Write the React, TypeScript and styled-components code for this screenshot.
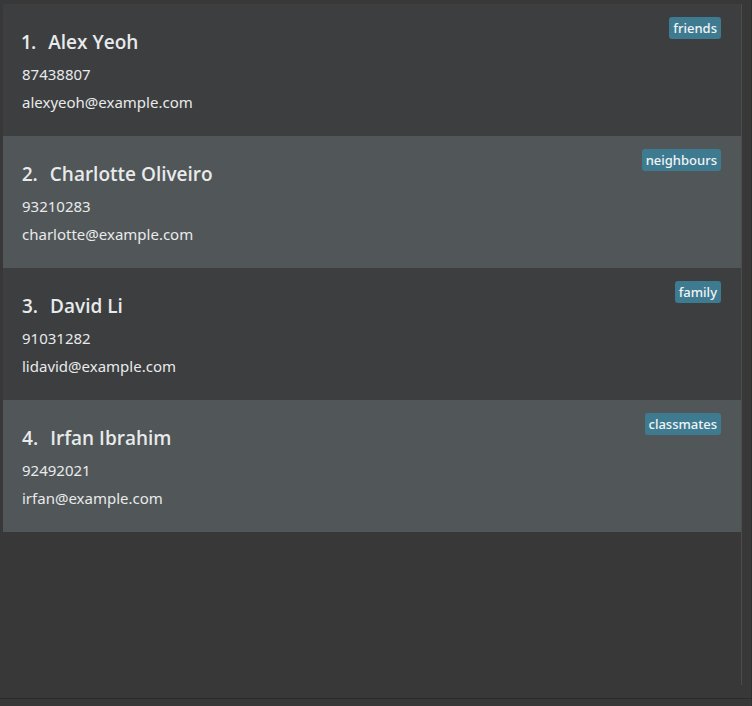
import React from "react";
import styled, { createGlobalStyle } from "styled-components";

const GlobalStyle = createGlobalStyle`
  * { box-sizing: border-box; }
  html, body, #root { height: 100%; }
  body {
    margin: 0;
    background: #383838;
    color: #e8eaeb;
    font-family: "Noto Sans", "Open Sans", sans-serif;
  }
`;

const Page = styled.main`
  display: flex;
  flex-direction: column;
  min-height: 100%;
  border-right: 1px solid #2f2f2f;
`;

const ListPane = styled.section`
  flex: 1;
  display: flex;
  padding: 4px 9px 13px 3px;
`;

const PersonList = styled.ul`
  flex: 1;
  margin: 0;
  padding: 0;
  list-style: none;
  border-right: 1px solid #4c4c4c;
`;

const PersonCard = styled.li`
  display: flex;
  align-items: flex-start;
  justify-content: space-between;
  padding: 13px 20px 20px 19px;
  background: #3c3e3f;

  &:nth-child(even) {
    background: #515658;
  }
`;

const Details = styled.div`
  padding-top: 11px;
`;

const Name = styled.h2`
  display: flex;
  gap: 12px;
  margin: 0 0 4px;
  font-family: "Open Sans", "Noto Sans", sans-serif;
  font-size: 19px;
  font-weight: 600;
  font-variant-numeric: proportional-nums;
  line-height: 28px;
`;

const Line = styled.p`
  margin: 0;
  font-size: 15px;
  line-height: 28px;
`;

const Tag = styled.span`
  padding: 0 4px;
  border-radius: 3px;
  background: #3e7b91;
  color: #f2f4f5;
  font-size: 13px;
  font-weight: 500;
  line-height: 22px;
`;

const Footer = styled.footer`
  height: 8px;
  border-top: 1px solid #2b2b2b;
`;

const people = [
  { name: "Alex Yeoh", phone: "87438807", email: "alexyeoh@example.com", tag: "friends" },
  { name: "Charlotte Oliveiro", phone: "93210283", email: "charlotte@example.com", tag: "neighbours" },
  { name: "David Li", phone: "91031282", email: "lidavid@example.com", tag: "family" },
  { name: "Irfan Ibrahim", phone: "92492021", email: "irfan@example.com", tag: "classmates" },
];

export default function App() {
  return (
    <Page>
      <GlobalStyle />
      <ListPane>
        <PersonList>
          {people.map((person, index) => (
            <PersonCard key={person.email}>
              <Details>
                <Name>
                  <span>{index + 1}.</span>
                  <span>{person.name}</span>
                </Name>
                <Line>{person.phone}</Line>
                <Line>{person.email}</Line>
              </Details>
              <Tag>{person.tag}</Tag>
            </PersonCard>
          ))}
        </PersonList>
      </ListPane>
      <Footer />
    </Page>
  );
}
